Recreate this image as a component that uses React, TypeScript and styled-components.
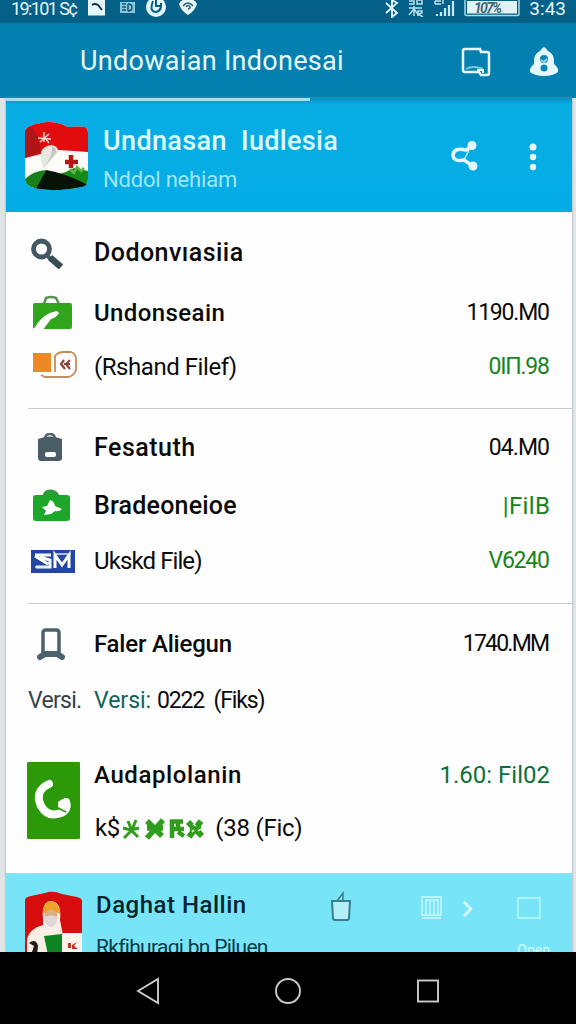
import React from "react";
import styled, { createGlobalStyle } from "styled-components";

const GlobalStyle = createGlobalStyle`
  * { box-sizing: border-box; }
  html, body { margin: 0; padding: 0; }
  body { font-family: Roboto, "Liberation Sans", sans-serif; background: #000; }
  svg { display: block; flex: none; }
`;

const Screen = styled.div`
  width: 576px;
  height: 1024px;
  display: flex;
  flex-direction: column;
  overflow: hidden;
`;

const Text = styled.span<{ $size?: number; $weight?: number; $color?: string; $track?: number }>`
  font-size: ${(p) => p.$size ?? 24}px;
  font-weight: ${(p) => p.$weight ?? 400};
  color: ${(p) => p.$color ?? "#0b0b0b"};
  letter-spacing: ${(p) => p.$track ?? 0}px;
  line-height: 1.17;
  white-space: pre;
`;

const StatusBar = styled.div`
  height: 23px;
  flex: none;
  display: flex;
  justify-content: space-between;
  background: linear-gradient(#04618a, #056085);
  padding: 0 10px 0 11px;
`;

const StatusGroup = styled.div<{ $gap: number }>`
  display: flex;
  align-items: flex-start;
  gap: ${(p) => p.$gap}px;
  height: 18px;
`;

const StatusText = styled(Text)<{ $width?: number }>`
  width: ${(p) => (p.$width ? `${p.$width}px` : "auto")};
  line-height: 18px;
`;

const AppBar = styled.header`
  height: 75px;
  flex: none;
  display: flex;
  align-items: center;
  background: #0480b0;
  padding: 2px 17px 0 80px;
`;

const BarActions = styled.div`
  margin-left: auto;
  display: flex;
  align-items: center;
  gap: 38px;
`;

const Body = styled.main`
  flex: 1;
  min-height: 0;
  display: flex;
  padding: 0 4px 0 6px;
  background: #dfe5e7;
`;

const Card = styled.section`
  flex: 1;
  min-width: 0;
  display: flex;
  flex-direction: column;
  background: #fefefe;
  box-shadow: 0 0 2px #8b999d;
  overflow: hidden;
`;

const Hero = styled.div`
  height: 114px;
  flex: none;
  display: flex;
  flex-direction: column;
  background: linear-gradient(#0590c2 0, #07ade3 7px, #04ace6 100%);
`;

const Progress = styled.div`
  width: 304px;
  height: 3px;
  background: #a4dcf0;
`;

const HeroContent = styled.div`
  flex: 1;
  display: flex;
  align-items: flex-start;
  padding: 20px 35px 0 19px;
`;

const HeroText = styled.div`
  display: flex;
  flex-direction: column;
  gap: 9px;
  margin: 5px 0 0 15px;
`;

const HeroActions = styled.div`
  margin: 19px 0 0 auto;
  display: flex;
  align-items: center;
  gap: 50px;
`;

const Group = styled.div<{ $top: number; $bottom: number }>`
  padding: ${(p) => p.$top}px 22px ${(p) => p.$bottom}px;
`;

const Divider = styled.hr`
  flex: none;
  width: auto;
  height: 1px;
  margin: 0 0 0 22px;
  border: 0;
  background: #c9cccd;
`;

const Row = styled.div<{ $h: number }>`
  height: ${(p) => p.$h}px;
  display: flex;
  align-items: center;
`;

const IconCell = styled.div`
  width: 66px;
  flex: none;
  display: flex;
  align-items: center;
`;

const Value = styled(Text)`
  margin-left: auto;
  margin-right: ${(p) => -(p.$track ?? 0)}px;
`;

const Contact = styled.div`
  display: flex;
  padding: 34px 22px 0 21px;
  height: 145px;
  flex: none;
`;

const ContactText = styled.div`
  flex: 1;
  display: flex;
  flex-direction: column;
  gap: 26px;
  padding-left: 14px;
`;

const Line = styled.div<{ $indent?: number }>`
  display: flex;
  align-items: center;
  height: 27px;
  padding-left: ${(p) => p.$indent ?? 0}px;
`;

const Footer = styled.div`
  flex: 1;
  min-height: 0;
  overflow: hidden;
  display: flex;
  background: #78e4f8;
  border-top: 1px solid #9bdce8;
  padding: 17px 22px 0 19px;
`;

const FooterText = styled.div`
  width: 233px;
  flex: none;
  display: flex;
  flex-direction: column;
  gap: 16px;
  margin-left: 14px;
`;

const FooterActions = styled.div`
  flex: 1;
  display: flex;
  align-items: flex-start;
`;

const ListActions = styled.div`
  display: flex;
  gap: 18px;
  margin-left: 67px;
`;

const OpenCell = styled.div`
  margin-left: auto;
  display: flex;
  flex-direction: column;
  align-items: flex-start;
  gap: 23px;
  padding-top: 6px;
`;

const NavBar = styled.nav`
  height: 72px;
  flex: none;
  display: flex;
  align-items: center;
  justify-content: center;
  gap: 114px;
  padding-top: 6px;
  background: #000;
`;

const white = "#e6f8fd";

const StatusIcons = () => (
  <StatusGroup $gap={13}>
    <StatusText $size={18} $color={white} $track={-1.6} $width={64}>19:101 S¢</StatusText>
    <svg width="17" height="16" viewBox="0 0 17 16">
      <path d="M0 0H17V15.500H0Z" fill={white} />
      <path d="M4 5Q7 3 10 5L14 10" fill="none" stroke="#12384a" strokeWidth="2" />
    </svg>
    <svg width="17" height="14" viewBox="-2 0 17 14">
      <path d="M0 2H15V13H0Z" fill="#8bc6da" />
      <path d="M2 4H6M2 7H6M2 10H6M8 4V11M8 4Q12 4 12 7.500T8 11" fill="none" stroke="#0b5778" strokeWidth="1.400" />
    </svg>
    <svg width="18" height="17" viewBox="2 0 18 17" overflow="visible">
      <circle cx="10" cy="7" r="10" fill={white} />
      <path d="M7 1Q3 12 10 12Q16 11 15 3M10 0V6H14" fill="none" stroke="#075f83" strokeWidth="2" />
    </svg>
    <svg width="18" height="16" viewBox="0 0 18 16" overflow="visible">
      <path d="M0 4Q2-1 9-1T18 4Q16 11 9 15Q2 11 0 4Z" fill={white} />
      <path d="M4 6Q9 0 14 6M7 7Q9 4 11 7Q11 9 9 9" fill="none" stroke="#315e6e" strokeWidth="1.500" />
    </svg>
  </StatusGroup>
);

const StatusRight = () => (
  <StatusGroup $gap={9}>
    <svg width="14" height="18" viewBox="0 0 14 18">
      <path d="M1 3L12 13L7 17V0L12 3L1 13" fill="none" stroke={white} strokeWidth="1.800" />
    </svg>
    <svg width="16" height="17" viewBox="0 0 16 17">
      <path d="M1 1H6V4H1M9 0H14V4H9ZM1 8H14M6 6V16M1 15L6 9L9 13M10 16V11H14V13L10 14L15 17" fill="none" stroke="#b9dfeb" strokeWidth="1.500" />
    </svg>
    <svg width="22" height="17" viewBox="0 0 22 17">
      <path d="M2 1H8M2 4H8M2 1V4M10 0V4" fill="none" stroke="#c7e8f1" strokeWidth="1.400" />
      <path d="M4 16V14M8 16V12M12 16V8M16 16V5M20 16V1" fill="none" stroke="#c7e8f1" strokeWidth="2.200" />
    </svg>
    <svg width="56" height="17" viewBox="0 0 56 17">
      <rect x="1" y="-2" width="54" height="17.500" rx="1.500" fill="none" stroke="#a9d6e5" strokeWidth="1.500" />
      <rect x="3" y="1" width="50" height="12.500" fill="#e1f3f7" />
      <text x="10" y="12.500" fontSize="14" fontFamily="Roboto, sans-serif" fontStyle="italic" fontWeight="700" fill="#426774" textLength="28">107%</text>
    </svg>
    <StatusText $size={19} $color={white}>3:43</StatusText>
  </StatusGroup>
);

const Flag = () => (
  <svg width="63" height="70" viewBox="0 0 63 70">
    <defs>
      <clipPath id="flag">
        <path d="M0 10Q2 4 16 2Q28-1 43 6Q54 5 60 6Q63 8 63 12V58Q63 65 56 66Q32 71 15 68Q0 66 0 58Z" />
      </clipPath>
    </defs>
    <g clipPath="url(#flag)">
      <path d="M0 0H63V70H0Z" fill="#fbfbf7" />
      <path d="M0 0H63V31L34 29L16 33L0 37Z" fill="#e20b0d" />
      <path d="M5 5Q14 12 16 31L0 37V8Z" fill="#af1516" />
      <path d="M16 31Q18 25 27 24Q34 26 33 31L19 48Q15 40 16 31Z" fill="#e8e6e1" />
      <path d="M27 25Q32 27 31 32L20 45Q28 34 27 25Z" fill="#c9c7c2" />
      <path d="M0 58Q8 50 21 49L12 69H0Z" fill="#158019" />
      <path d="M34 53Q42 51 49 47L63 50V69H42Z" fill="#168a17" />
      <path d="M45 48L49 52L52 46L56 50L59 47" fill="none" stroke="#62b449" strokeWidth="2.500" />
      <path d="M21 49Q40 52 63 64V70H10Z" fill="#071309" />
      <path d="M46 34V47M40 41H53" stroke="#b71515" strokeWidth="4.500" />
      <path d="M13 17L26 18M19 11L19 21M15 21L24 13M20 17L24 22" stroke="#f2d7d2" strokeWidth="1.500" />
    </g>
  </svg>
);

const Portrait = () => (
  <svg width="57" height="64" viewBox="0 0 57 64">
    <path d="M0 9Q0 6 6 5L20 2Q28-1 37 3L52 6Q57 7 57 10V64H0Z" fill="#d70d0d" />
    <path d="M38 42H57V64H38Z" fill="#f8f5ee" />
    <path d="M18 27Q16 11 26 10Q37 11 35 29L38 44V64H2V50Q3 38 18 34Z" fill="#f8efe4" />
    <path d="M18 23Q18 10 26 10Q35 11 35 23Q26 18 18 23Z" fill="#eda42f" />
    <ellipse cx="26" cy="24" rx="6.500" ry="5" fill="#dcaf83" />
    <path d="M19 26Q26 23 33 26Q32 35 26 36Q20 35 19 26Z" fill="#e0d6d5" />
    <path d="M19 45L37 43V64H23Z" fill="#0a8320" />
    <path d="M4 52Q11 47 13 55L12 64H6L9 55Z" fill="#241a16" />
    <path d="M43 52H46V57H43ZM47 54L52 51L49 55L53 58H47Z" fill="#be3427" />
  </svg>
);

const Search = () => (
  <svg width="36" height="32" viewBox="0 0 36 32">
    <circle cx="13.500" cy="12" r="8" fill="none" stroke="#455861" strokeWidth="4.800" />
    <path d="M18 18L23 22" stroke="#455861" strokeWidth="4" />
    <path d="M22 20.500L33 30" stroke="#394b55" strokeWidth="6.500" />
  </svg>
);

const GreenCase = () => (
  <svg width="45" height="36" viewBox="0 0 45 36">
    <path d="M16 9L18 3Q23 1 28 3L31 9" fill="none" stroke="#53974a" strokeWidth="2.500" />
    <rect x="5" y="8" width="39" height="26" rx="2" fill="#31a51b" />
    <path d="M5 35Q13 22 20 19Q30 14 31 18Q28 23 23 24L14 36Z" fill="#fff" />
    <path d="M5 27L9 28L5 33Z" fill="#31a51b" />
  </svg>
);

const Cards = () => (
  <svg width="50" height="36" viewBox="0 0 50 36">
    <rect x="5" y="4" width="18" height="19" fill="#ed8924" />
    <path d="M27 23V7Q30 3 36 3H43Q49 5 48 13V21Q46 27 40 28H17L13 26" fill="none" stroke="#c88b5c" strokeWidth="1.800" />
    <path d="M36 11L33 15L37 20M42 11L38 15L42 20M36 15H42" fill="none" stroke="#8d4337" strokeWidth="2.200" />
  </svg>
);

const Bag = () => (
  <svg width="44" height="30" viewBox="0 0 44 30">
    <path d="M17 5Q18 1 22 1T27 5" fill="none" stroke="#52646c" strokeWidth="2.500" />
    <path d="M10 6Q22 1 34 6V26Q33 28 31 28H12Q10 27 10 25Z" fill="#4a5d67" />
    <rect x="17" y="19" width="11" height="5" rx="2" fill="#fff" />
  </svg>
);

const StarCase = () => (
  <svg width="44" height="34" viewBox="0 0 44 34">
    <path d="M16 7Q17 2 22 2Q28 2 30 7" fill="#2d9d37" stroke="#2d9d37" strokeWidth="3" />
    <rect x="5" y="6" width="37" height="26" rx="3" fill="#1ca72a" />
    <path d="M22 11Q26 12 27 17L34 20Q31 23 27 22L23 25L16 26L18 22L14 18L19 17Z" fill="#fff" />
  </svg>
);

const SmBadge = () => (
  <svg width="48" height="24" viewBox="0 0 48 24">
    <rect x="3" y="1" width="44" height="23" fill="#2147a0" />
    <path d="M7 6H23M7 7L20 15M8 18H22V11L12 8M27 19V6L34 16L41 6V19" fill="none" stroke="#fff" strokeWidth="3" />
    <path d="M7 18H20M26 5H43" stroke="#dce6fa" strokeWidth="1.500" />
  </svg>
);

const Stand = () => (
  <svg width="44" height="34" viewBox="0 0 44 34">
    <path d="M15 26V6Q15 3 18 3H28Q31 3 31 6V26Z" fill="none" stroke="#4b626b" strokeWidth="3.500" />
    <path d="M12 30L17 27H29L34 30" fill="none" stroke="#4b626b" strokeWidth="6" strokeLinecap="round" />
  </svg>
);

const Phone = () => (
  <svg width="53" height="77" viewBox="0 0 53 77">
    <rect width="53" height="77" rx="1" fill="#2c9a08" />
    <path d="M22 22Q7 29 14 44Q21 56 34 51Q41 48 39 40" fill="none" stroke="#fff" strokeWidth="8" strokeLinecap="round" />
    <path d="M31 40Q36 35 42 38Q46 45 40 50L31 45Z" fill="#fff" />
    <path d="M31 46L39 50" stroke="#2c9a08" strokeWidth="1.500" />
  </svg>
);

const Leaves = () => (
  <svg width="84" height="22" viewBox="-2 0 84 22">
    <g fill="none" stroke="#319d1e" strokeWidth="4">
      <path d="M1 10L9 12L17 10M6 3L10 13L16 19M14 2L10 12L2 20" strokeWidth="3" />
      <path d="M25 3L40 18M41 2L25 20M25 10H41" strokeWidth="5.500" />
      <path d="M50 2V20M48 3.500H61M50 11H62M56 3V12M56 14L62 18" strokeWidth="4.500" />
      <path d="M66 4L80 18M79 3L67 19M68 10H79" strokeWidth="6" />
    </g>
    <path d="M71 6L74 8M76 13L79 11M70 14L72 12" stroke="#fff" strokeWidth="1.500" />
  </svg>
);

export default function App() {
  return (
    <Screen>
      <GlobalStyle />
      <StatusBar>
        <StatusIcons />
        <StatusRight />
      </StatusBar>
      <AppBar>
        <Text $size={27} $color={white} $track={0.3}>Undowaian Indonesai</Text>
        <BarActions>
          <svg width="30" height="30" viewBox="0 0 30 30">
            <path d="M4 2H19L20 5H26Q28 5 28 7V26Q28 28 26 28H20L18 25H4Q2 25 2 23V4Q2 2 4 2Z" fill="none" stroke={white} strokeWidth="2.500" />
            <path d="M5 22Q12 18 22 22" fill="none" stroke="#7cc6df" strokeWidth="2" />
            <path d="M16 23H22V26" fill="none" stroke={white} strokeWidth="2" />
          </svg>
          <svg width="30" height="30" viewBox="0 0 30 30">
            <path d="M15 0Q17 1 19 4Q26 7 25 17Q30 21 29 25Q24 29 15 29T1 25Q0 21 5 17Q4 7 11 4Q13 1 15 0Z" fill={white} />
            <circle cx="15" cy="12" r="4" fill="#0d86b3" />
            <circle cx="15" cy="21" r="3.500" fill="#0d86b3" />
            <path d="M12 13L15 15L18 12" fill="none" stroke="#91d5e6" strokeWidth="2" />
          </svg>
        </BarActions>
      </AppBar>
      <Body>
        <Card>
          <Hero>
            <Progress />
            <HeroContent>
              <Flag />
              <HeroText>
                <Text $size={27} $weight={500} $color="#dcfaff" $track={0.35}>Undnasan  Iudlesia</Text>
                <Text $size={22} $color="#a2e6fa" $track={-0.2}>Nddol nehiam</Text>
              </HeroText>
              <HeroActions>
                <svg width="29" height="32" viewBox="0 0 29 32">
                  <path d="M22 6L16 10Q4 7 3 15Q3 22 14 20L23 26" fill="none" stroke={white} strokeWidth="3.500" />
                  <path d="M14 20L19 10" stroke={white} strokeWidth="1.200" />
                  <circle cx="22" cy="5.500" r="4.500" fill={white} />
                  <circle cx="23" cy="26" r="4.500" fill={white} />
                </svg>
                <svg width="8" height="30" viewBox="0 0 8 30">
                  <circle cx="4" cy="6" r="3.500" fill={white} />
                  <circle cx="4" cy="16" r="3.200" fill={white} />
                  <circle cx="4" cy="26" r="3.200" fill={white} />
                </svg>
              </HeroActions>
            </HeroContent>
          </Hero>

          <Group $top={11} $bottom={17}>
            <Row $h={60}>
              <IconCell><Search /></IconCell>
              <Text $size={25} $weight={500} $track={0.45}>Dodonvıasiia</Text>
            </Row>
            <Row $h={60}>
              <IconCell><GreenCase /></IconCell>
              <Text $weight={500} $track={0.4}>Undonseain</Text>
              <Value $size={23} $track={-1.2}>1190.M0</Value>
            </Row>
            <Row $h={48}>
              <IconCell><Cards /></IconCell>
              <Text $track={-0.45}>(Rshand Filef)</Text>
              <Value $size={23} $track={-1.2} $color="#16851a">0IП.98</Value>
            </Row>
          </Group>
          <Divider />
          <Group $top={9} $bottom={15}>
            <Row $h={60}>
              <IconCell><Bag /></IconCell>
              <Text $size={25} $weight={500} $track={0.5}>Fesatuth</Text>
              <Value $size={23} $track={-0.9}>04.M0</Value>
            </Row>
            <Row $h={56}>
              <IconCell><StarCase /></IconCell>
              <Text $size={25} $weight={500} $track={0.2}>Bradeoneioe</Text>
              <Value $track={0.4} $color="#16851a">|FilB</Value>
            </Row>
            <Row $h={54}>
              <IconCell><SmBadge /></IconCell>
              <Text $track={-0.9}>Ukskd File)</Text>
              <Value $size={23} $track={-1.2} $color="#16851a">V6240</Value>
            </Row>
          </Group>
          <Divider />
          <Group $top={10} $bottom={0}>
            <Row $h={60}>
              <IconCell><Stand /></IconCell>
              <Text $weight={500} $track={-0.2}>Faler Aliegun</Text>
              <Value $size={23} $track={-1.8}>1740.MM</Value>
            </Row>
            <Row $h={54}>
              <IconCell><Text $size={23} $track={-0.7} $color="#35434a">Versi.</Text></IconCell>
              <Text $size={23} $color="#0d625a">Versi: </Text>
              <Text $size={23} $track={-1.1}>0222  (Fiks)</Text>
            </Row>
          </Group>
          <Contact>
            <Phone />
            <ContactText>
              <Line>
                <Text $weight={500} $track={0.6}>Audaplolanin</Text>
                <Value $color="#0c7038">1.60: Fil02</Value>
              </Line>
              <Line $indent={1}>
                <Text $track={-0.4}>k$</Text>
                <Leaves />
                <Text $track={-0.25}>  (38 (Fic)</Text>
              </Line>
            </ContactText>
          </Contact>
          <Footer>
            <Portrait />
            <FooterText>
              <Text $weight={500} $color="#06262e" $track={0.5}>Daghat Hallin</Text>
              <Text $size={21} $color="#0a3a44" $track={-0.7}>Rkfihuragi bn Piluen</Text>
            </FooterText>
            <FooterActions>
              <svg width="24" height="32" viewBox="0 0 24 32">
                <path d="M3 10H21L20 27Q20 29 18 29H6Q4 29 4 27Z" fill="#b3eff6" stroke="#397f8c" strokeWidth="2" />
                <path d="M8 10L14 2V10" fill="none" stroke="#397f8c" strokeWidth="1.500" />
              </svg>
              <ListActions>
                <svg width="24" height="32" viewBox="0 0 24 32">
                  <path d="M2 6H21V24H2ZM2 27H21M6 8V23M10 10V23M14 10V23M18 8V23M5 9H18" fill="none" stroke="#b8f4fb" strokeWidth="1.800" />
                </svg>
                <svg width="12" height="32" viewBox="0 0 12 32">
                  <path d="M2 11L9 18L2 25" fill="none" stroke="#dcfbfd" strokeWidth="2.500" />
                </svg>
              </ListActions>
              <OpenCell>
                <svg width="24" height="22" viewBox="0 0 24 22">
                  <rect x="1" y="1" width="22" height="20" fill="none" stroke="#b9f8fd" strokeWidth="1.600" />
                </svg>
                <Text $size={14} $color="#d2fbfd">Open</Text>
              </OpenCell>
            </FooterActions>
          </Footer>
        </Card>
      </Body>
      <NavBar>
        <svg width="24" height="28" viewBox="0 0 24 28">
          <path d="M22 2V26L2 14Z" fill="none" stroke="#c9c9c9" strokeWidth="1.900" />
        </svg>
        <svg width="28" height="28" viewBox="0 0 28 28">
          <circle cx="14" cy="14" r="12" fill="none" stroke="#c9c9c9" strokeWidth="1.900" />
        </svg>
        <svg width="24" height="28" viewBox="0 0 24 28">
          <rect x="2" y="3.500" width="20" height="21" fill="none" stroke="#c9c9c9" strokeWidth="1.900" />
        </svg>
      </NavBar>
    </Screen>
  );
}
